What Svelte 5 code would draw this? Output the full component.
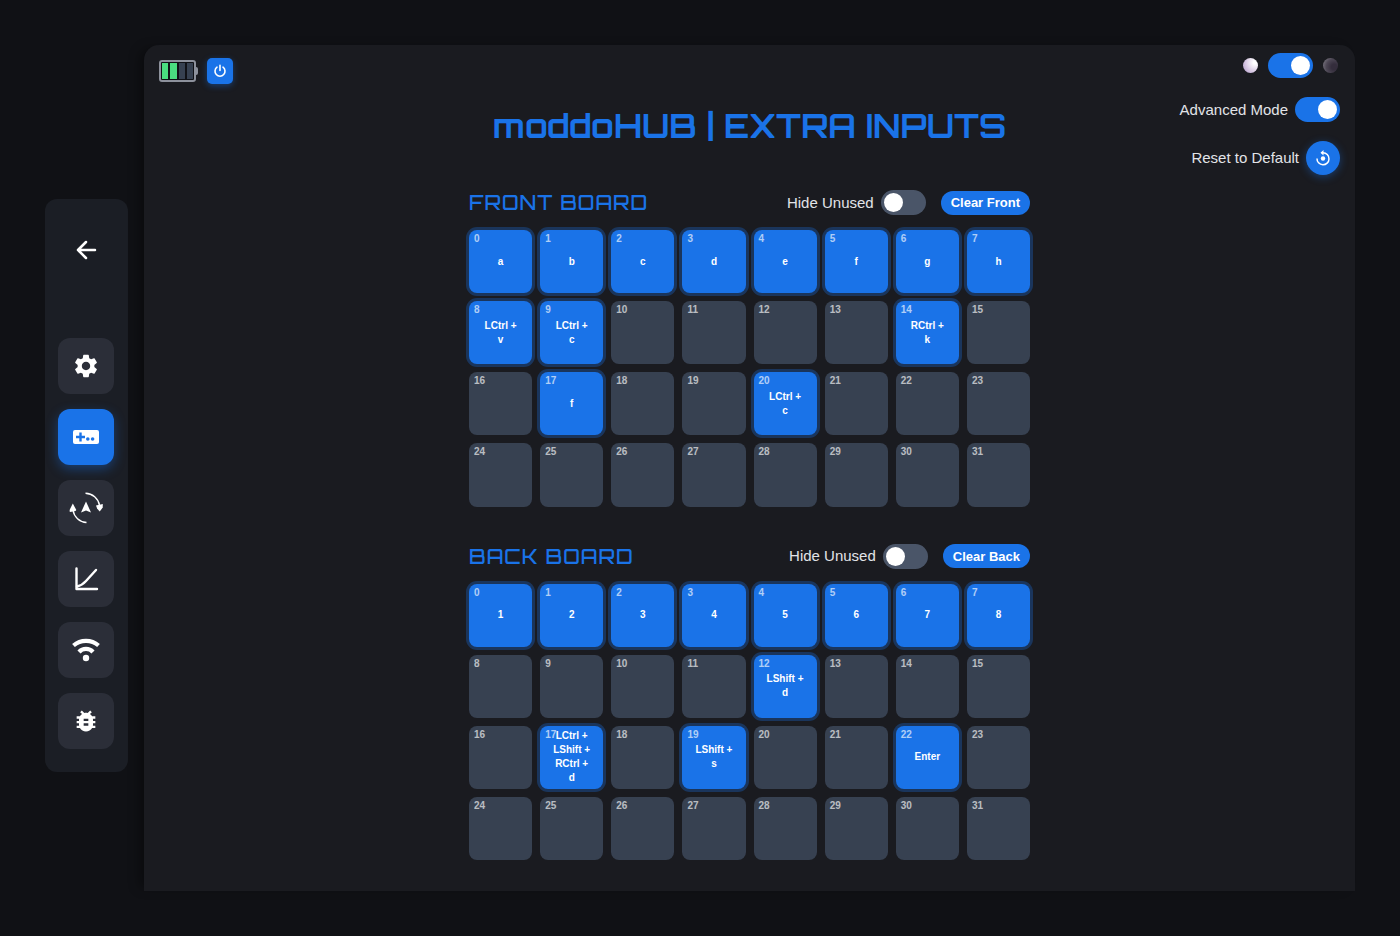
<script lang="ts">
interface Board {
  id: string;
  title: string;
  clearLabel: string;
  hideUnused: boolean;
  inputs: Record<number, string>;
}

const SLOT_COUNT = 32;
const slots = Array.from({ length: SLOT_COUNT }, (_, i) => i);

let darkTheme = $state(true);
let advancedMode = $state(true);
let activePage = $state("inputs");

const pages = ["settings", "inputs", "orientation", "curve", "wifi", "debug"];

/** Key combos per slot; each line break is a new key of the combo. */
function defaultBoards(): Board[] {
  return [
    {
      id: "front",
      title: "FRONT BOARD",
      clearLabel: "Clear Front",
      hideUnused: false,
      inputs: {
        0: "a", 1: "b", 2: "c", 3: "d", 4: "e", 5: "f", 6: "g", 7: "h",
        8: "LCtrl +\nv",
        9: "LCtrl +\nc",
        14: "RCtrl +\nk",
        17: "f",
        20: "LCtrl +\nc",
      },
    },
    {
      id: "back",
      title: "BACK BOARD",
      clearLabel: "Clear Back",
      hideUnused: false,
      inputs: {
        0: "1", 1: "2", 2: "3", 3: "4", 4: "5", 5: "6", 6: "7", 7: "8",
        12: "LShift +\nd",
        17: "LCtrl +\nLShift +\nRCtrl +\nd",
        19: "LShift +\ns",
        22: "Enter",
      },
    },
  ];
}

let boards: Board[] = $state(defaultBoards());

function visibleSlots(board: Board): number[] {
  return board.hideUnused ? slots.filter((i) => board.inputs[i]) : slots;
}

function resetToDefault(): void {
  boards = defaultBoards();
}
</script>

<div class="page">
  <nav class="sidebar">
    <button class="nav-button back" aria-label="Back">
      <svg width="28" height="28" viewBox="0 0 28 28" fill="none" stroke="#fff" stroke-width="2.5" stroke-linecap="round" stroke-linejoin="round">
        <path d="M23 14H6M14 6L6 14l8 8" />
      </svg>
    </button>

    {#each pages as name}
      <button
        class="nav-button"
        class:active={activePage == name}
        aria-label={name}
        onclick={() => (activePage = name)}
      >
        {#if name == "settings"}
          <svg width="28" height="28" viewBox="0 0 24 24" fill="#fff">
            <path d="M19.14 12.94c.04-.3.06-.61.06-.94 0-.32-.02-.64-.07-.94l2.03-1.58c.18-.14.23-.41.12-.61l-1.92-3.32c-.12-.22-.37-.29-.59-.22l-2.39.96c-.5-.38-1.03-.7-1.62-.94l-.36-2.54c-.04-.24-.24-.41-.48-.41h-3.84c-.24 0-.43.17-.47.41l-.36 2.54c-.59.24-1.13.57-1.62.94l-2.39-.96c-.22-.08-.47 0-.59.22L2.74 8.87c-.12.21-.08.47.12.61l2.03 1.58c-.05.3-.09.63-.09.94s.02.64.07.94l-2.03 1.58c-.18.14-.23.41-.12.61l1.92 3.32c.12.22.37.29.59.22l2.39-.96c.5.38 1.03.7 1.62.94l.36 2.54c.05.24.24.41.48.41h3.84c.24 0 .44-.17.47-.41l.36-2.54c.59-.24 1.13-.56 1.62-.94l2.39.96c.22.08.47 0 .59-.22l1.92-3.32c.12-.22.07-.47-.12-.61l-2.01-1.58zM12 15.6c-1.98 0-3.6-1.62-3.6-3.6s1.62-3.6 3.6-3.6 3.6 1.62 3.6 3.6-1.62 3.6-3.6 3.6z" />
          </svg>
        {:else if name == "inputs"}
          <svg width="28" height="28" viewBox="0 0 28 28">
            <rect x="1" y="7" width="26" height="14" rx="2" fill="#fff" />
            <path d="M8.5 9.5v9M4 14h9" stroke="#1a73e8" stroke-width="2.4" />
            <circle cx="15.8" cy="16" r="1.8" fill="#1a73e8" />
            <circle cx="20.6" cy="16" r="1.8" fill="#1a73e8" />
          </svg>
        {:else if name == "orientation"}
          <svg width="36" height="36" viewBox="0 0 36 36" fill="#fff">
            <path d="M17.5 3.3a14.5 14.5 0 0 1 14 12M18.5 32.5A14.5 14.5 0 0 1 5 20" fill="none" stroke="#fff" stroke-width="1.4" />
            <path d="M28 15.500l6.800-1.500-.1 3.600-3 4-2.600-3.100z" />
            <path d="M4.800 13.600L8.300 20l-.8 1-2.500.6-3.200.3-.2-2z" />
            <path d="M18 11.500L23 22.500 18 20.500 13 22.500z" />
          </svg>
        {:else if name == "curve"}
          <svg width="28" height="28" viewBox="0 0 28 28" fill="none" stroke="#fff" stroke-width="2.4" stroke-linecap="round" stroke-linejoin="round">
            <path d="M4.5 3.5v20.5h20.5" />
            <path d="M5 21.500Q10 20.500 14 16L24 5" />
          </svg>
        {:else if name == "wifi"}
          <svg width="28" height="28" viewBox="0 0 28 28" fill="none" stroke="#fff" stroke-width="4.2">
            <path d="M1.5 9.5a19 19 0 0 1 25 0" />
            <path d="M7 16a9.5 9.5 0 0 1 14 0" />
            <circle cx="14" cy="22" r="3.2" fill="#fff" stroke="none" />
          </svg>
        {:else}
          <svg width="28" height="28" viewBox="0 0 24 24" fill="#fff">
            <path d="M20 8h-2.81c-.45-.78-1.07-1.45-1.82-1.96L17 4.41 15.59 3l-2.17 2.17C12.96 5.06 12.49 5 12 5c-.49 0-.96.06-1.41.17L8.41 3 7 4.41l1.62 1.63C7.88 6.55 7.26 7.22 6.81 8H4v2h2.09c-.05.33-.09.66-.09 1v1H4v2h2v1c0 .34.04.67.09 1H4v2h2.81c1.04 1.79 2.97 3 5.19 3s4.15-1.21 5.19-3H20v-2h-2.09c.05-.33.09-.66.09-1v-1h2v-2h-2v-1c0-.34-.04-.67-.09-1H20V8zm-6 8h-4v-2h4v2zm0-4h-4v-2h4v2z" />
          </svg>
        {/if}
      </button>
    {/each}
  </nav>

  <main class="panel">
    <header class="panel-header">
      <div class="status">
        <div class="battery" role="img" aria-label="Battery half full">
          <span class="bar full"></span>
          <span class="bar full"></span>
          <span class="bar"></span>
          <span class="bar"></span>
        </div>
        <button class="power-button" aria-label="Power">
          <svg width="14" height="14" viewBox="0 0 14 14" fill="none" stroke="#fff" stroke-width="1.6" stroke-linecap="round">
            <path d="M7 1.300v5.200M4 3.200a5 5 0 1 0 6 0" />
          </svg>
        </button>
      </div>

      <h1>moddoHUB | EXTRA INPUTS</h1>

      <div class="options">
        <div class="theme-row">
          <span class="moon light"></span>
          <input class="toggle" type="checkbox" aria-label="Dark theme" bind:checked={darkTheme} />
          <span class="moon dark"></span>
        </div>
        <label class="option">
          Advanced Mode
          <input class="toggle" type="checkbox" bind:checked={advancedMode} />
        </label>
        <div class="option">
          <span id="reset-label">Reset to Default</span>
          <button class="reset-button" aria-labelledby="reset-label" onclick={resetToDefault}>
            <svg width="18" height="18" viewBox="0 0 18 18" fill="none" stroke="#fff" stroke-width="1.5">
              <path d="M3 9.5A6 6 0 1 0 9 3.800H7.500" />
              <path d="M9.500 1L6.500 3.800l3 2.800z" fill="#fff" stroke="none" />
              <circle cx="9" cy="9.5" r="2.2" fill="#fff" stroke="none" />
            </svg>
          </button>
        </div>
      </div>
    </header>

    <div class="boards">
      {#each boards as board (board.id)}
        <section class="board">
          <div class="board-header">
            <h2>{board.title}</h2>
            <label class="hide-unused">
              Hide Unused
              <input class="toggle" type="checkbox" bind:checked={board.hideUnused} />
            </label>
            <button class="clear-button" onclick={() => (board.inputs = {})}>
              {board.clearLabel}
            </button>
          </div>

          <div class="grid">
            {#each visibleSlots(board) as slot (slot)}
              <button class="slot" class:used={board.inputs[slot]}>
                <span class="slot-number">{slot}</span>
                <span class="slot-keys">{board.inputs[slot] ?? ""}</span>
              </button>
            {/each}
          </div>
        </section>
      {/each}
    </div>
  </main>
</div>

<style>
:global(body) {
  background-color: #101115;
}

.page {
  --blue: #1a73e8;

  display: flex;
  align-items: flex-start;
  gap: 16px;

  box-sizing: border-box;
  min-height: 100vh;
  padding: 45px;

  font-family: "Liberation Sans", Arial, sans-serif;
  font-size: 15px;
  line-height: 20px;
  color: #e2e4e8;
  background-color: #101115;
}

button {
  border: none;
  padding: 0;
  font-family: inherit;
  color: #fff;
  cursor: pointer;
}

svg {
  display: block;
}

/* Sidebar */

.sidebar {
  display: flex;
  flex-direction: column;
  flex: none;
  gap: 15px;

  margin-top: 154px;
  padding: 23px 14px 23px 13px;
  border-radius: 12px;
  background-color: #1b1e25;
}

.nav-button {
  display: flex;
  align-items: center;
  justify-content: center;

  width: 56px;
  height: 56px;
  border-radius: 12px;
  background-color: #2b2e38;
}

.nav-button.back {
  margin-bottom: 45px;
  background-color: transparent;
}

.nav-button.active {
  background-color: var(--blue);
  box-shadow: 0 4px 12px rgba(26, 115, 232, 0.4);
}

/* Panel */

.panel {
  flex: 1;
  box-sizing: border-box;
  min-height: calc(100vh - 90px);
  padding: 8px 15px 28px;
  border-radius: 15px 15px 0 0;
  background-color: #1a1b20;
  box-shadow: -8px 0 12px -4px rgba(0, 0, 0, 0.4);
}

.panel-header {
  display: grid;
  grid-template-columns: 1fr auto 1fr;
  align-items: start;
}

.status {
  display: flex;
  align-items: center;
  gap: 11px;
  margin-top: 5px;
}

.battery {
  position: relative;
  display: flex;
  gap: 2px;

  box-sizing: border-box;
  width: 37px;
  height: 22px;
  padding: 1px;
  border: 2px solid #8d919c;
  border-radius: 3px;
  background-color: #111217;
}

.battery::after {
  content: "";
  position: absolute;
  top: 5px;
  right: -4px;
  width: 2px;
  height: 8px;
  border-radius: 0 2px 2px 0;
  background-color: #8d919c;
}

.bar {
  flex: 1;
  background-color: #374151;
}

.bar.full {
  background-color: #4ade80;
}

.power-button {
  display: flex;
  align-items: center;
  justify-content: center;
  width: 26px;
  height: 26px;
  border-radius: 5px;
  background-color: var(--blue);
  box-shadow: 0 2px 6px rgba(26, 115, 232, 0.4);
}

h1 {
  margin: 53px 0 0;
  font-family: Orbitron, "DejaVu Sans", sans-serif;
  font-size: 33px;
  font-weight: 700;
  line-height: 40px;
  color: var(--blue);
}

.options {
  display: flex;
  flex-direction: column;
  align-items: flex-end;
  gap: 19px;
}

.theme-row {
  display: flex;
  align-items: center;
  gap: 10px;
  padding-right: 2px;
}

.moon {
  width: 15px;
  height: 15px;
  border-radius: 50%;
}

.moon.light {
  background: radial-gradient(circle at 80% 30%, #fff 10%, #d6c6e2 60%, #ab94c4);
}

.moon.dark {
  background: radial-gradient(circle at 75% 60%, #342d3c 20%, #4c4654 55%, #8a8790);
}

.option {
  display: flex;
  align-items: center;
  gap: 7px;
}

.toggle {
  appearance: none;
  box-sizing: border-box;
  width: 45px;
  height: 25px;
  margin: 0;
  padding: 3px;
  border-radius: 13px;
  background-color: #4a5568;
  cursor: pointer;
}

.toggle::before {
  content: "";
  display: block;
  width: 19px;
  height: 19px;
  border-radius: 50%;
  background-color: #fff;
}

.toggle:checked {
  background-color: var(--blue);
}

.toggle:checked::before {
  margin-left: auto;
}

.reset-button {
  display: flex;
  align-items: center;
  justify-content: center;
  width: 34px;
  height: 34px;
  border-radius: 50%;
  background-color: var(--blue);
  box-shadow: 0 2px 8px rgba(26, 115, 232, 0.4);
}

/* Boards */

.boards {
  display: flex;
  flex-direction: column;
  gap: 37px;
  max-width: 561px;
  margin: 15px auto 0;
}

.board-header {
  display: flex;
  align-items: center;
  margin-bottom: 15px;
}

h2 {
  flex: 1;
  margin: 0;
  font-family: Orbitron, "DejaVu Sans", sans-serif;
  font-size: 20px;
  font-weight: 500;
  line-height: 25px;
  letter-spacing: 1px;
  color: var(--blue);
}

.hide-unused {
  display: flex;
  align-items: center;
  gap: 7px;
  margin-right: 15px;
}

.clear-button {
  height: 24px;
  padding: 0 10px;
  border-radius: 12px;
  font-size: 13px;
  font-weight: 700;
  background-color: var(--blue);
}

.grid {
  display: grid;
  grid-template-columns: repeat(8, 1fr);
  gap: 8px;
}

.slot {
  position: relative;
  display: flex;
  align-items: center;
  justify-content: center;

  aspect-ratio: 1;
  border-radius: 8px;
  font-size: 10px;
  font-weight: 700;
  line-height: 14px;
  background-color: #374151;
}

.slot.used {
  background-color: var(--blue);
  box-shadow: 0 0 0 3px rgba(26, 115, 232, 0.3);
}

.slot-number {
  position: absolute;
  top: 2px;
  left: 5px;
  opacity: 0.65;
}

.slot-keys {
  white-space: pre-line;
}
</style>
